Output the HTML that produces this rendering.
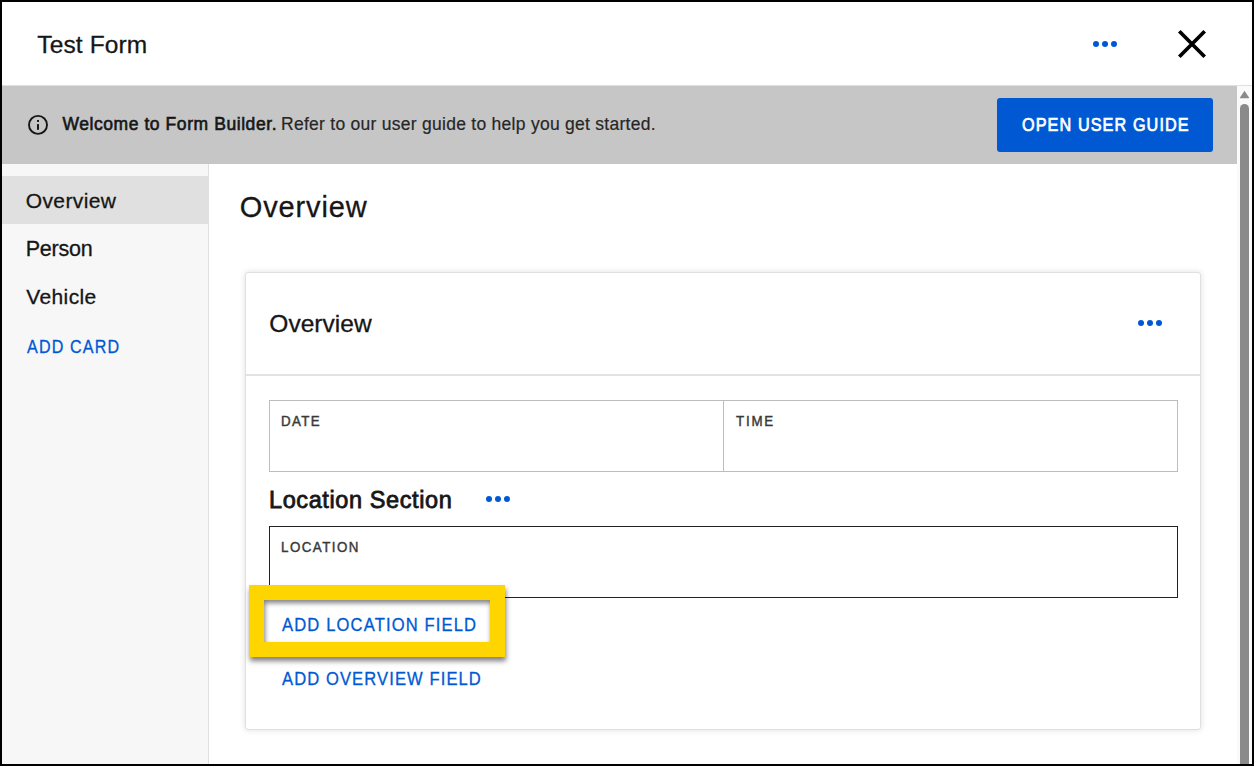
<!DOCTYPE html>
<html>
<head>
<meta charset="utf-8">
<style>
*{box-sizing:border-box;margin:0;padding:0}
html,body{width:1254px;height:766px;overflow:hidden;background:#000}
body{font-family:"Liberation Sans",sans-serif;color:#161616;position:relative}
.abs{position:absolute}
#frame{position:absolute;left:2px;top:2px;width:1250px;height:762px;background:#fff;overflow:hidden}
/* everything positioned relative to page (subtract 2) */
.t{position:absolute;white-space:nowrap;line-height:1}
</style>
</head>
<body>
<div id="frame">
  <!-- header -->
  <div class="abs" style="left:0;top:0;width:1250px;height:84px;background:#fff;border-bottom:1px solid #e0e0e0"></div>
  <div class="t" id="title" style="left:35.3px;top:30.9px;font-size:24.5px;letter-spacing:0.13px;-webkit-text-stroke:0.3px currentColor">Test Form</div>
  <svg class="abs" style="left:1088px;top:36px" width="30" height="12" viewBox="0 0 30 12">
    <circle cx="6" cy="6" r="3" fill="#0059d3"/><circle cx="15" cy="6" r="3" fill="#0059d3"/><circle cx="24" cy="6" r="3" fill="#0059d3"/>
  </svg>
  <svg class="abs" style="left:1174px;top:26px" width="34" height="34" viewBox="0 0 34 34">
    <path d="M3.3 3.3 L28.7 28.7 M28.7 3.3 L3.3 28.7" stroke="#000" stroke-width="3.7" fill="none"/>
  </svg>

  <!-- banner -->
  <div class="abs" style="left:0;top:84px;width:1235px;height:78px;background:#c6c6c6"></div>
  <svg class="abs" style="left:25px;top:111px" width="22" height="24" viewBox="0 0 22 24">
    <circle cx="11" cy="11.9" r="9.0" stroke="#161616" stroke-width="1.9" fill="none"/>
    <rect x="10" y="11.1" width="2" height="5.7" fill="#161616"/>
    <rect x="10" y="7" width="2" height="1.9" fill="#161616"/>
  </svg>
  <div class="t" id="wb" style="left:60.4px;top:114.4px;font-size:17.5px;-webkit-text-stroke:0.6px #161616;letter-spacing:0.57px">Welcome to Form Builder.</div>
  <div class="t" id="wr" style="left:279px;top:114.4px;font-size:17.5px;letter-spacing:0.27px;color:#262626;-webkit-text-stroke:0.2px currentColor">Refer to our user guide to help you get started.</div>
  <div class="abs" style="left:995px;top:96px;width:216px;height:54px;background:#0059d3;border-radius:3px"></div>
  <div class="t" id="guide" style="left:1019.6px;top:113.8px;font-size:18px;color:#fff;-webkit-text-stroke:0.7px #fff;letter-spacing:1.22px;transform:scaleX(0.9);transform-origin:0 0">OPEN USER GUIDE</div>

  <!-- scrollbar -->
  <div class="abs" style="left:1235px;top:84px;width:15px;height:678px;background:#fafafa"></div>
  <svg class="abs" style="left:1237px;top:88px" width="11" height="9" viewBox="0 0 11 9"><path d="M5.5 0.8 L10 7.6 Q10.3 8.2 9.6 8.2 L1.4 8.2 Q0.7 8.2 1 7.6 Z" fill="#8a8a8a"/></svg>
  <div class="abs" style="left:1238px;top:102px;width:9px;height:670px;background:#8a8a8a;border-radius:4.5px"></div>

  <!-- sidebar -->
  <div class="abs" style="left:0;top:162px;width:207px;height:600px;background:#f7f7f7;border-right:1px solid #e0e0e0"></div>
  <div class="abs" style="left:0;top:174px;width:206px;height:48px;background:#e0e0e0"></div>
  <div class="t" id="s1" style="left:23.8px;top:187.9px;font-size:21px;letter-spacing:0.37px;-webkit-text-stroke:0.3px currentColor">Overview</div>
  <div class="t" id="s2" style="left:23.7px;top:236.8px;font-size:21.5px;letter-spacing:-0.2px;-webkit-text-stroke:0.3px currentColor">Person</div>
  <div class="t" id="s3" style="left:24.3px;top:283.9px;font-size:21px;letter-spacing:0.37px;-webkit-text-stroke:0.3px currentColor">Vehicle</div>
  <div class="t" id="s4" style="left:24.7px;top:336.9px;font-size:17.5px;color:#0059d3;-webkit-text-stroke:0.3px #0059d3;letter-spacing:1.24px;transform:scaleX(0.92);transform-origin:0 0">ADD CARD</div>

  <!-- main heading -->
  <div class="t" id="h1" style="left:237.8px;top:191px;font-size:29px;letter-spacing:0.86px;-webkit-text-stroke:0.3px currentColor">Overview</div>

  <!-- card -->
  <div class="abs" style="left:243px;top:270px;width:956px;height:458px;background:#fff;border:1px solid #e0e0e0;border-radius:3px;box-shadow:0 0 6px rgba(0,0,0,0.13)"></div>
  <div class="abs" style="left:244px;top:372px;width:954px;height:2px;background:#e2e2e2"></div>
  <div class="t" id="ct" style="left:267.3px;top:309.8px;font-size:24.5px;letter-spacing:0.03px;-webkit-text-stroke:0.3px currentColor">Overview</div>
  <svg class="abs" style="left:1133px;top:315px" width="30" height="12" viewBox="0 0 30 12">
    <circle cx="6" cy="6" r="3" fill="#0059d3"/><circle cx="15" cy="6" r="3" fill="#0059d3"/><circle cx="24" cy="6" r="3" fill="#0059d3"/>
  </svg>

  <!-- date/time -->
  <div class="abs" style="left:267px;top:398px;width:909px;height:72px;border:1px solid #bdbdbd"></div>
  <div class="abs" style="left:721px;top:398px;width:1px;height:72px;background:#bdbdbd"></div>
  <div class="t" id="date" style="left:279px;top:411.9px;font-size:14.5px;color:#393939;-webkit-text-stroke:0.45px #393939;letter-spacing:1.5px;transform:scaleX(0.92);transform-origin:0 0">DATE</div>
  <div class="t" id="time" style="left:733.7px;top:411.9px;font-size:14.5px;color:#393939;-webkit-text-stroke:0.45px #393939;letter-spacing:1.92px;transform:scaleX(0.92);transform-origin:0 0">TIME</div>

  <!-- location section -->
  <div class="t" id="ls" style="left:267px;top:486.8px;font-size:23.5px;-webkit-text-stroke:0.8px #161616;letter-spacing:0.6px">Location Section</div>
  <svg class="abs" style="left:481px;top:491px" width="30" height="12" viewBox="0 0 30 12">
    <circle cx="6" cy="6" r="3" fill="#0059d3"/><circle cx="15" cy="6" r="3" fill="#0059d3"/><circle cx="24" cy="6" r="3" fill="#0059d3"/>
  </svg>
  <div class="abs" style="left:267px;top:524px;width:909px;height:72px;border:1px solid #222"></div>
  <div class="t" id="loc" style="left:279.1px;top:537.8px;font-size:14.5px;color:#393939;-webkit-text-stroke:0.45px #393939;letter-spacing:1.6px;transform:scaleX(0.92);transform-origin:0 0">LOCATION</div>

  <!-- highlight -->
  <div class="abs" style="left:247px;top:583px;width:256px;height:72px;border:15px solid #ffd500;box-shadow:1px 4px 5px rgba(0,0,0,0.5), inset 1px 3px 5px rgba(0,0,0,0.5);background:#fff"></div>
  <div class="t" id="alf" style="left:279.9px;top:613.6px;font-size:18px;color:#0059d3;-webkit-text-stroke:0.3px #0059d3;letter-spacing:1.25px;transform:scaleX(0.92);transform-origin:0 0">ADD LOCATION FIELD</div>
  <div class="t" id="aof" style="left:280px;top:667.7px;font-size:18px;color:#0059d3;-webkit-text-stroke:0.3px #0059d3;letter-spacing:1.2px;transform:scaleX(0.92);transform-origin:0 0">ADD OVERVIEW FIELD</div>
</div>
</body>
</html>
